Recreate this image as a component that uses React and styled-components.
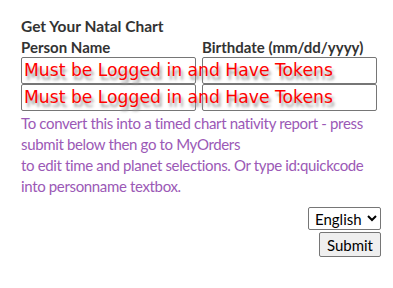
import * as React from "react"
import styled, { createGlobalStyle } from "styled-components"

const GlobalStyle = createGlobalStyle`
  body {
    margin: 0;
    background: #fff;
    font-family: "Lato", "Open Sans", sans-serif;
  }
`

const Container = styled.form`
  padding: 15px 18px 20px 21px;
  width: 360px;
`

const Title = styled.h3`
  margin: 0;
  font-size: 15.5px;
  font-weight: 700;
  color: #333;
  line-height: 22px;
`

const FieldGrid = styled.div`
  position: relative;
  display: grid;
  grid-template-columns: 175px 175px;
  column-gap: 6px;
`

const Label = styled.label`
  font-size: 15px;
  font-weight: 700;
  color: #333;
  line-height: 20px;
`

const Input = styled.input`
  box-sizing: border-box;
  height: 27px;
  margin: 0;
  border: 1px solid #767676;
  border-radius: 2px;
  background: #fff;
`

const Notice = styled.div`
  position: absolute;
  left: 3px;
  top: ${props => props.$top}px;
  font-family: "DejaVu Sans", Verdana, sans-serif;
  font-size: 17.2px;
  color: #ff0000;
  white-space: nowrap;
  text-shadow: 2px 4px 3px #999;
  pointer-events: none;
`

const Help = styled.p`
  margin: 2px 0 0;
  font-size: 15px;
  letter-spacing: -0.35px;
  line-height: 21px;
  color: #9b59b6;
`

const Actions = styled.div`
  display: flex;
  flex-direction: column;
  align-items: flex-end;
  margin-top: 10px;
  gap: 2px;
`

const Select = styled.select`
  font-family: inherit;
  font-size: 15px;
  height: 23px;
  padding: 0 2px;
  border: 1px solid #767676;
  border-radius: 2px;
  background: #fff;
  color: #000;
`

const Button = styled.button`
  font-family: inherit;
  font-size: 15px;
  height: 25px;
  padding: 0 7px;
  border: 1px solid #767676;
  border-radius: 2px;
  background: #efefef;
  color: #000;
`

const message = "Must be Logged in and Have Tokens"

const App = () => {
  return (
    <>
      <GlobalStyle />
      <Container onSubmit={e => e.preventDefault()}>
        <Title>Get Your Natal Chart</Title>
        <FieldGrid>
          <Label>Person Name</Label>
          <Label>Birthdate (mm/dd/yyyy)</Label>
          <Input />
          <Input />
          <Input />
          <Input />
          <Notice $top={23}>{message}</Notice>
          <Notice $top={50}>{message}</Notice>
        </FieldGrid>
        <Help>
          To convert this into a timed chart nativity report - press
          <br />
          submit below then go to MyOrders
          <br />
          to edit time and planet selections. Or type id:quickcode
          <br />
          into personname textbox.
        </Help>
        <Actions>
          <Select defaultValue="en">
            <option value="en">English</option>
          </Select>
          <Button type="submit">Submit</Button>
        </Actions>
      </Container>
    </>
  )
}

export default App
